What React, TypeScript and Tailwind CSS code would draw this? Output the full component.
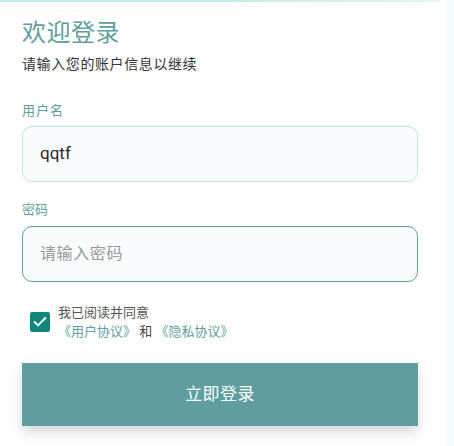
import { Check } from 'lucide-react';

const font = '[font-family:Roboto,"Noto_Sans_CJK_SC",sans-serif]';

export default function App() {
  return (
    <div className={`flex h-[446px] w-[454px] bg-[#f6fbfd] ${font}`}>
      <div className="w-[446px] shrink-0 bg-white">
        {/* 顶部阴影线 */}
        <div className="h-[2px] w-[440px] bg-gradient-to-r from-[#c6eaea] via-[#c6eaea] to-[#e4f5f5]" />

        <div className="pl-[22px] pr-[28px]">
          <h1 className="mt-[15px] text-[24px] leading-[32px] tracking-[0.5px] text-[#5f9ea0]">欢迎登录</h1>
          <p className="mt-[5px] text-[14px] leading-[20px] tracking-[0.6px] text-[#333]">请输入您的账户信息以继续</p>

          {/* 用户名 */}
          <label className="mt-[28px] block text-[13px] leading-[18px] tracking-[1px] text-[#5f9ea0]">用户名</label>
          <div className="mt-[6px] flex h-[56px] items-center rounded-[10px] border border-[#bfe4e4] bg-[#f8fcfd] px-[17px] text-[17px] text-[#2a2a2a]">
            qqtf
          </div>

          {/* 密码 */}
          <label className="mt-[19px] block text-[13px] leading-[18px] text-[#5f9ea0]">密码</label>
          <div className="mt-[7px] flex h-[56px] items-center rounded-[10px] border border-[#5f9ea0] bg-[#f8fcfd] px-[17px] text-[16px] tracking-[0.6px] text-[#999]">
            请输入密码
          </div>

          {/* 协议 */}
          <div className="mt-[21px] flex items-center gap-[8px] pl-[8px]">
            <div className="flex h-[20px] w-[20px] items-center justify-center rounded-[2px] bg-[#10877a]">
              <Check className="h-[16px] w-[16px] text-white" strokeWidth={3} />
            </div>
            <div className="text-[13px] leading-[19px]">
              <div className="text-[#555]">我已阅读并同意</div>
              <div className="whitespace-pre text-[#5f9ea0]">
                {'《用户协议》 '}<span className="text-[#444]">和</span>{' 《隐私协议》'}
              </div>
            </div>
          </div>

          <button className="mt-[22px] flex h-[63px] w-full items-center justify-center bg-[#5f9ea0] text-[17px] tracking-[0.5px] text-white shadow-[0_6px_12px_rgba(0,0,0,0.16)]">
            立即登录
          </button>
        </div>
      </div>
    </div>
  );
}
